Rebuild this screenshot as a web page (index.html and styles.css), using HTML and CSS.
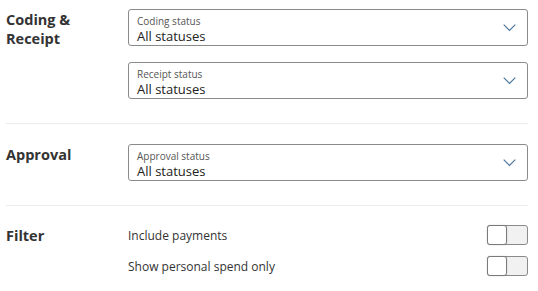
FILE: index.html
```html
<!DOCTYPE html>
<html lang="en">
<head>
  <meta charset="UTF-8" />
  <title>Filters</title>
  <link rel="stylesheet" href="styles.css">
</head>
<body>

  <section class="group group-first">
    <h2 class="group-title">Coding &amp;<br>Receipt</h2>
    <div class="group-body">
      <div class="select">
        <div class="select-text">
          <span class="select-label">Coding status</span>
          <span class="select-value">All statuses</span>
        </div>
        <svg class="chevron" width="13" height="8" viewBox="0 0 13 8"><path d="M0.7 0.7l5.8 5.8 5.8-5.8" fill="none" stroke="#4a7399" stroke-width="1.15"/></svg>
      </div>
      <div class="select">
        <div class="select-text">
          <span class="select-label">Receipt status</span>
          <span class="select-value">All statuses</span>
        </div>
        <svg class="chevron" width="13" height="8" viewBox="0 0 13 8"><path d="M0.7 0.7l5.8 5.8 5.8-5.8" fill="none" stroke="#4a7399" stroke-width="1.15"/></svg>
      </div>
    </div>
  </section>

  <section class="group">
    <h2 class="group-title">Approval</h2>
    <div class="group-body">
      <div class="select">
        <div class="select-text">
          <span class="select-label">Approval status</span>
          <span class="select-value">All statuses</span>
        </div>
        <svg class="chevron" width="13" height="8" viewBox="0 0 13 8"><path d="M0.7 0.7l5.8 5.8 5.8-5.8" fill="none" stroke="#4a7399" stroke-width="1.15"/></svg>
      </div>
    </div>
  </section>

  <section class="group group-last">
    <h2 class="group-title">Filter</h2>
    <div class="group-body toggles">
      <label class="toggle-row">
        <span>Include payments</span>
        <span class="toggle"><span class="knob"></span></span>
      </label>
      <label class="toggle-row">
        <span>Show personal spend only</span>
        <span class="toggle"><span class="knob"></span></span>
      </label>
    </div>
  </section>

</body>
</html>
```

FILE: styles.css
```css
body { margin: 0; padding: 0 10px 0 6px; font-family: "Open Sans", Arial, sans-serif; color: #222; background: #fff; }
.group { display: flex; padding: 20px 0 24px; border-bottom: 1px solid #ececec; }
.group-first { padding-top: 9px; padding-bottom: 24px; }
.group-last { border-bottom: none; padding-top: 19px; }
.group-title { width: 122px; flex: none; margin: 0; padding-top: 1px; font-size: 14.5px; line-height: 19px; font-weight: bold; color: #333; }
.group-body { flex: 1; display: flex; flex-direction: column; gap: 16px; }
.select { display: flex; align-items: flex-start; height: 37px; box-sizing: border-box; border: 1px solid #8a8a8a; border-radius: 3px; padding: 0 11px 0 8px; }
.select-text { flex: 1; display: flex; flex-direction: column; padding-top: 5px; }
.select-label { font-size: 10px; line-height: 13px; color: #555; }
.select-value { font-size: 13px; line-height: 17px; color: #222; }
.chevron { flex: none; align-self: center; margin-top: 1px; }
.toggles { gap: 11px; }
.toggle-row { display: flex; align-items: center; justify-content: space-between; font-size: 12px; color: #333; height: 20px; }
.toggle { display: flex; width: 41px; height: 20px; box-sizing: border-box; border: 1px solid #8a8a8a; border-radius: 3px; background: #f1f1f1; }
.knob { width: 20px; height: 20px; margin: -1px; box-sizing: border-box; border: 1px solid #7a7a7a; border-radius: 3px; background: #fff; box-shadow: 0 0 2px rgba(0,0,0,0.15); }
```
